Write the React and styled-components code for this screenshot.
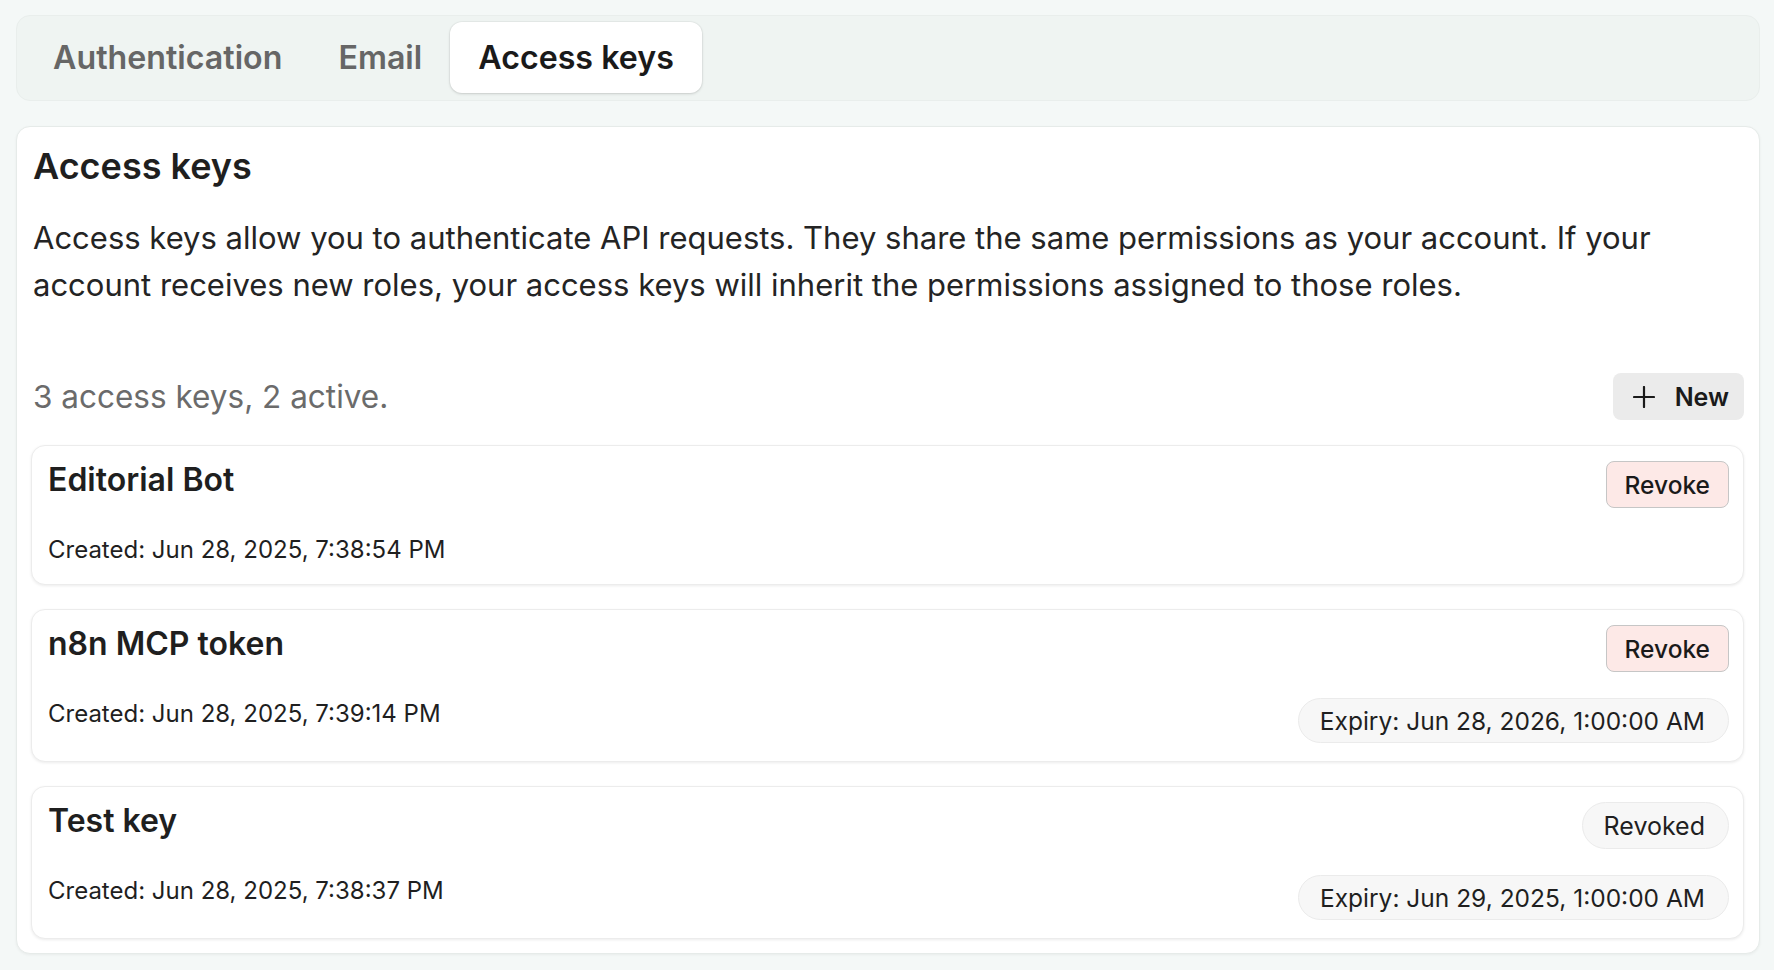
import React from 'react';
import styled, { createGlobalStyle } from 'styled-components';

const GlobalStyle = createGlobalStyle`
  html, body {
    margin: 0;
    padding: 0;
    background: #f4f8f7;
  }
  body {
    font-family: Inter, "Noto Sans", "Liberation Sans", sans-serif;
    color: #1f1f1f;
    -webkit-font-smoothing: antialiased;
  }
  * {
    box-sizing: border-box;
  }
`;

const Page = styled.div`
  display: flex;
  flex-direction: column;
  gap: 25px;
  padding: 15px 14px 15px 16px;
`;

const TabBar = styled.div`
  display: flex;
  align-items: stretch;
  height: 86px;
  padding: 6px 8px 7px;
  background: #eff4f2;
  border: 1px solid #e9eeec;
  border-radius: 14px;
`;

const Tab = styled.button`
  border: none;
  padding: 0 28px;
  font-family: inherit;
  font-size: 32.2px;
  font-weight: 600;
  background: ${(p) => (p.$active ? '#ffffff' : 'transparent')};
  color: ${(p) => (p.$active ? '#1a1a1a' : '#666666')};
  border-radius: 12px;
  box-shadow: ${(p) =>
    p.$active ? '0 1px 3px rgba(0, 0, 0, 0.14), 0 0 0 1px rgba(0,0,0,0.03)' : 'none'};
  cursor: pointer;
`;

const Card = styled.section`
  background: #ffffff;
  border: 1px solid #e6ebe9;
  border-radius: 14px;
  padding: 17px 15px 14px 14px;
  box-shadow: 0 1px 3px rgba(0, 0, 0, 0.05);
`;

const Heading = styled.h2`
  margin: 0;
  padding-left: 2px;
  font-size: 36px;
  line-height: 44px;
  font-weight: 600;
  color: #1f1f1f;
`;

const Description = styled.p`
  margin: 26px 0 0;
  padding-left: 2px;
  font-size: 31px;
  line-height: 47px;
  color: #242424;
`;

const Toolbar = styled.div`
  display: flex;
  align-items: center;
  justify-content: space-between;
  margin-top: 65px;
  padding-left: 2px;
`;

const Count = styled.span`
  font-size: 31.5px;
  color: #6b6b6b;
`;

const NewButton = styled.button`
  display: flex;
  align-items: center;
  gap: 20px;
  height: 47px;
  padding: 0 15px 0 20px;
  border: none;
  border-radius: 8px;
  background: #ebebeb;
  font-family: inherit;
  font-size: 25px;
  font-weight: 600;
  color: #1a1a1a;
`;

const KeyList = styled.div`
  display: flex;
  flex-direction: column;
  gap: 24px;
  margin-top: 25px;
`;

const KeyCard = styled.div`
  border: 1px solid #ececec;
  border-radius: 14px;
  padding: 15px 14px 18px 16px;
  background: #ffffff;
  box-shadow: 0 1px 3px rgba(0, 0, 0, 0.08);
`;

const Row = styled.div`
  display: flex;
  align-items: flex-start;
  justify-content: space-between;
  margin-top: ${(p) => p.$gap || 0}px;
`;

const KeyName = styled.div`
  font-size: 32px;
  line-height: 38px;
  font-weight: 600;
  color: #1f1f1f;
`;

const Created = styled.div`
  font-size: 24px;
  line-height: 32px;
  color: #1f1f1f;
`;

const RevokeButton = styled.button`
  height: 47px;
  padding: 0 18px;
  border: 1.5px solid #c6c6c6;
  border-radius: 8px;
  background: #fde9e7;
  font-family: inherit;
  font-size: 24.5px;
  font-weight: 500;
  color: #1a1a1a;
`;

const Pill = styled.span`
  display: inline-flex;
  align-items: center;
  height: ${(p) => p.$h || 45}px;
  padding: 0 23px 0 21px;
  border: 1px solid #ebebeb;
  border-radius: 999px;
  background: #f7f7f7;
  font-size: ${(p) => p.$size || 24.5}px;
  color: #1f1f1f;
`;

const PlusIcon = () => (
  <svg width="22" height="22" viewBox="0 0 22 22" fill="none">
    <path d="M11 1v20M1 11h20" stroke="#1a1a1a" strokeWidth="2.2" strokeLinecap="round" />
  </svg>
);

const keys = [
  { name: 'Editorial Bot', created: 'Jun 28, 2025, 7:38:54 PM', revoked: false },
  {
    name: 'n8n MCP token',
    created: 'Jun 28, 2025, 7:39:14 PM',
    expiry: 'Jun 28, 2026, 1:00:00 AM',
    revoked: false,
  },
  {
    name: 'Test key',
    created: 'Jun 28, 2025, 7:38:37 PM',
    expiry: 'Jun 29, 2025, 1:00:00 AM',
    revoked: true,
  },
];

export default function App() {
  return (
    <>
      <GlobalStyle />
      <Page>
        <TabBar>
          <Tab>Authentication</Tab>
          <Tab>Email</Tab>
          <Tab $active>Access keys</Tab>
        </TabBar>
        <Card>
          <Heading>Access keys</Heading>
          <Description>
            Access keys allow you to authenticate API requests. They share the same
            permissions as your account. If your account receives new roles, your
            access keys will inherit the permissions assigned to those roles.
          </Description>
          <Toolbar>
            <Count>3 access keys, 2 active.</Count>
            <NewButton>
              <PlusIcon />
              New
            </NewButton>
          </Toolbar>
          <KeyList>
            {keys.map((k) => (
              <KeyCard key={k.name}>
                <Row>
                  <KeyName>{k.name}</KeyName>
                  {k.revoked ? (
                    <Pill $h={47} $size={25}>
                      Revoked
                    </Pill>
                  ) : (
                    <RevokeButton>Revoke</RevokeButton>
                  )}
                </Row>
                <Row $gap={26}>
                  <Created>Created: {k.created}</Created>
                  {k.expiry && <Pill>Expiry: {k.expiry}</Pill>}
                </Row>
              </KeyCard>
            ))}
          </KeyList>
        </Card>
      </Page>
    </>
  );
}
